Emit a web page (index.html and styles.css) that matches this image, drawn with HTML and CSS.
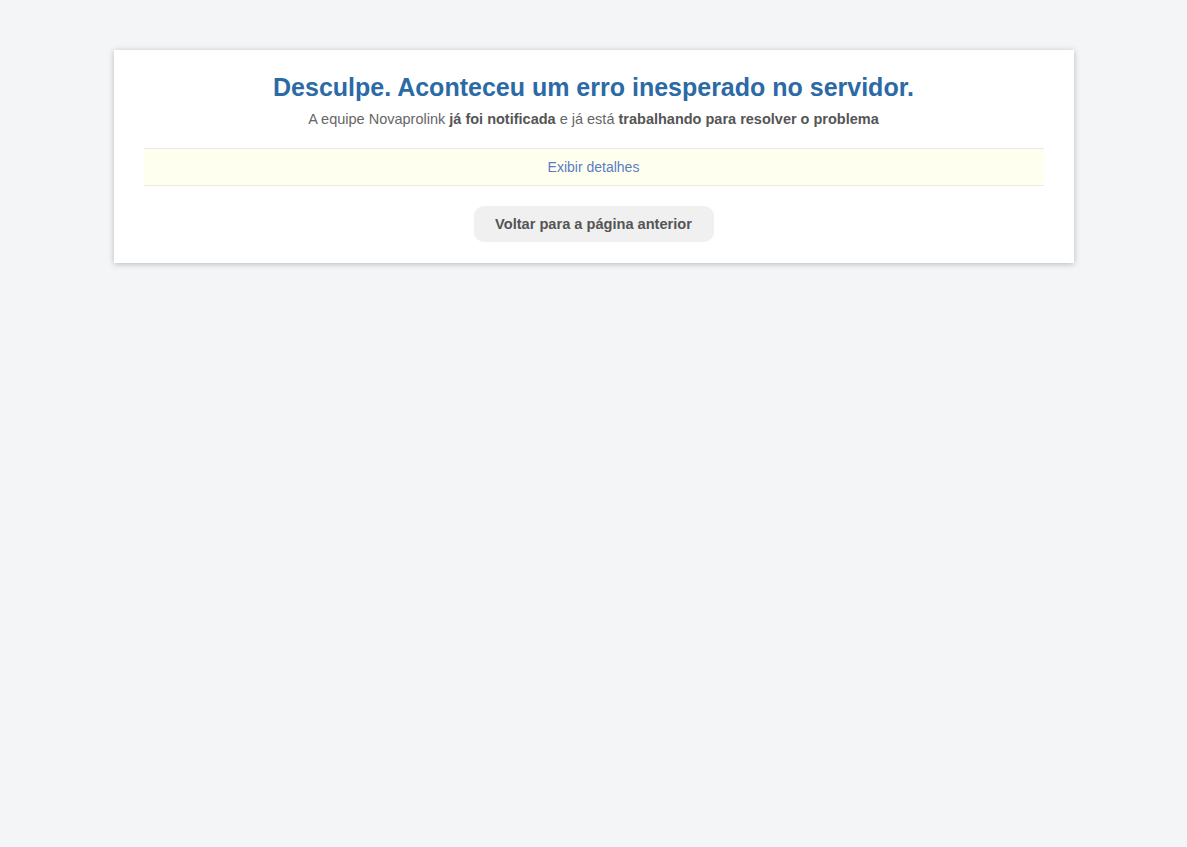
FILE: index.html
```html
<!DOCTYPE html>
<html>

<head>
    <meta charset="utf-8">
    <title>Erro no servidor</title>
    <link rel="stylesheet" href="styles.css">
</head>

<body>
    <div class="error-box">
        <h1 class="error-title">Desculpe. Aconteceu um erro inesperado no servidor.</h1>
        <p class="error-text">
            A equipe Novaprolink <b>já foi notificada</b> e já está <b>trabalhando para resolver o problema</b>
        </p>

        <!-- detalhes técnicos ficam escondidos até o clique -->
        <div class="details-bar">
            <a href="#" class="details-link">Exibir detalhes</a>
        </div>

        <div class="button-container">
            <button class="back-button" onclick="history.back()">Voltar para a página anterior</button>
        </div>
    </div>
</body>

</html>
```

FILE: styles.css
```css
body {
    font-family: Arial, "Liberation Sans", sans-serif;
    background-color: #f4f5f7;
    margin: 0;
    padding: 50px 0;
}

.error-box {
    width: 900px;
    margin: 0 auto;
    background-color: #ffffff;
    box-shadow: 0px 1px 6px rgba(0, 0, 0, 0.25);
    padding: 22px 30px 21px;
    text-align: center;
}

.error-title {
    margin: 0;
    font-size: 25px;
    line-height: 30px;
    color: #2c6aa6;
}

.error-text {
    margin: 8px 0 20px;
    font-size: 14.5px;
    line-height: 18px;
    color: #666666;
}

.error-text b {
    color: #555555;
}

/* faixa de detalhes */
.details-bar {
    background-color: #fffff0;
    border-top: 1px solid #efe6e6;
    border-bottom: 1px solid #efe6e6;
    padding: 10px 0;
    font-size: 14px;
    line-height: 16px;
}

.details-link {
    color: #5b7cc4;
    text-decoration: none;
}

.button-container {
    margin-top: 20px;
}

.back-button {
    font-family: Arial, "Liberation Sans", sans-serif;
    font-size: 14.6px;
    font-weight: bold;
    color: #555555;
    background-color: #f0f0f0;
    border: none;
    border-radius: 10px;
    width: 240px;
    height: 36px;
    cursor: pointer;
}
```
